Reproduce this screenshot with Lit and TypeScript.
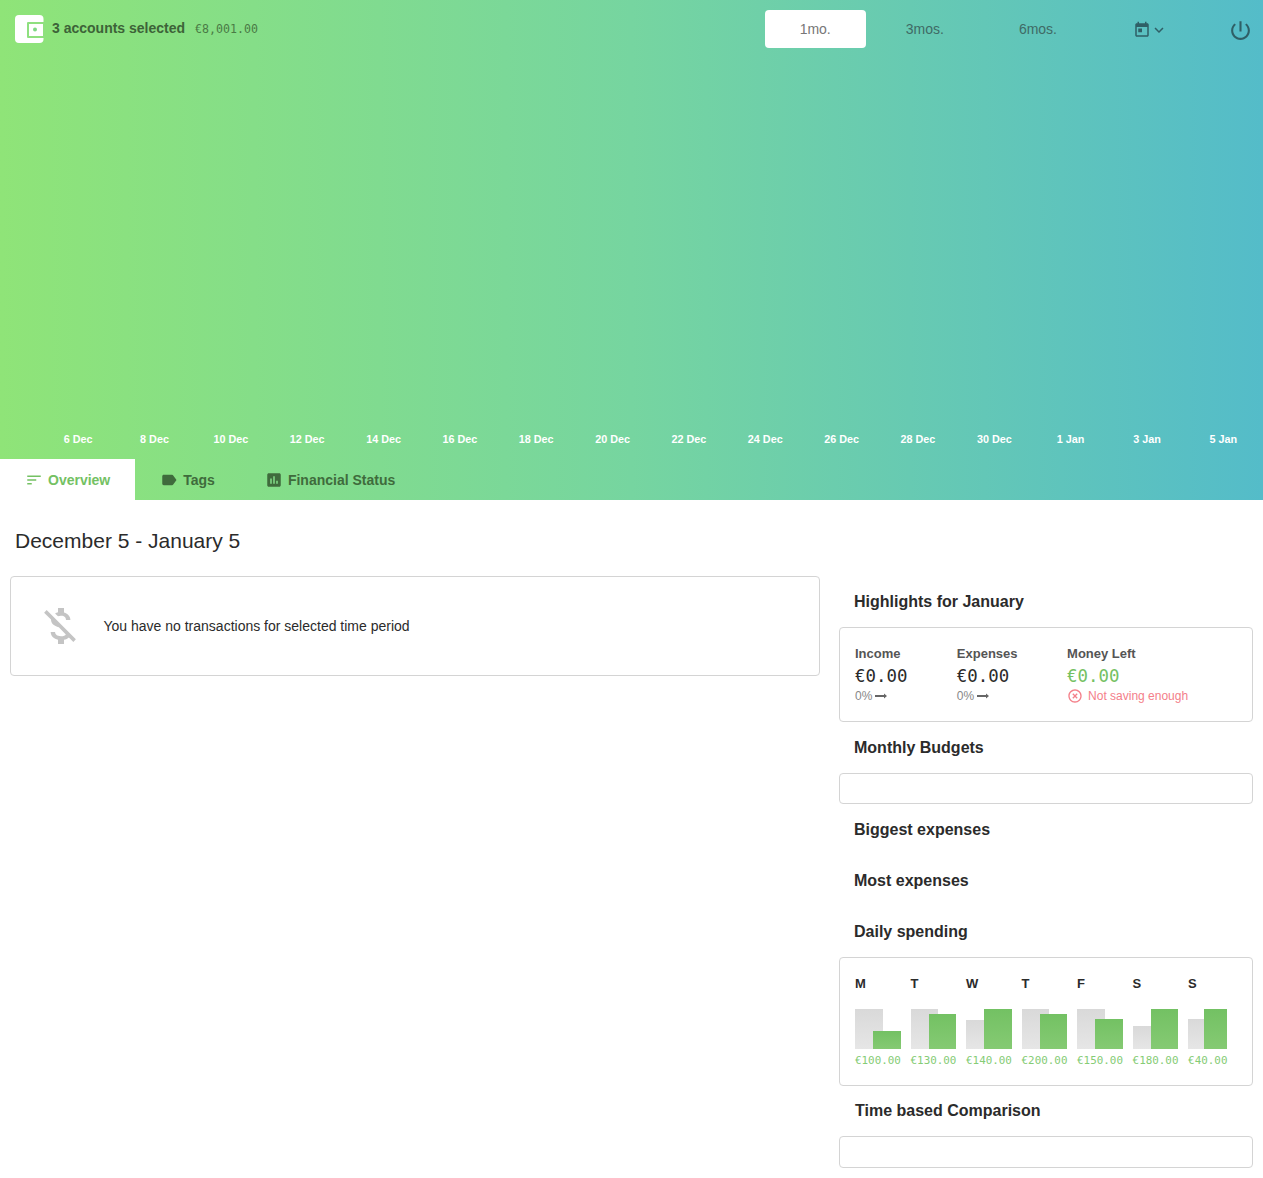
import { LitElement, html, css, svg } from 'lit';
import { customElement } from 'lit/decorators.js';

const labels = ['6 Dec', '8 Dec', '10 Dec', '12 Dec', '14 Dec', '16 Dec', '18 Dec', '20 Dec', '22 Dec', '24 Dec', '26 Dec', '28 Dec', '30 Dec', '1 Jan', '3 Jan', '5 Jan'];

const days = [
  { d: 'M', gray: 40, green: 18, amount: '€100.00' },
  { d: 'T', gray: 40, green: 35, amount: '€130.00' },
  { d: 'W', gray: 29, green: 40, amount: '€140.00' },
  { d: 'T', gray: 40, green: 35, amount: '€200.00' },
  { d: 'F', gray: 40, green: 30, amount: '€150.00' },
  { d: 'S', gray: 23, green: 40, amount: '€180.00' },
  { d: 'S', gray: 30, green: 40, amount: '€40.00' },
];

// material icon paths
const icons = {
  today: 'M19 3h-1V1h-2v2H8V1H6v2H5c-1.11 0-1.99.9-1.99 2L3 19c0 1.1.89 2 2 2h14c1.1 0 2-.9 2-2V5c0-1.1-.89-2-2-2zm0 16H5V8h14v11zM7 10h5v5H7z',
  chevron: 'M16.59 8.59L12 13.17 7.41 8.59 6 10l6 6 6-6z',
  power: 'M13 3h-2v10h2V3zm4.83 2.17l-1.42 1.42C17.99 7.86 19 9.81 19 12c0 3.87-3.13 7-7 7s-7-3.13-7-7c0-2.19 1.01-4.14 2.58-5.42L6.17 5.17C4.23 6.82 3 9.26 3 12c0 4.97 4.03 9 9 9s9-4.03 9-9c0-2.74-1.23-5.18-3.17-6.83z',
  sort: 'M3 18h6v-2H3v2zM3 6v2h18V6H3zm0 7h12v-2H3v2z',
  label: 'M17.63 5.84C17.27 5.33 16.67 5 16 5L5 5.01C3.9 5.01 3 5.9 3 7v10c0 1.1.9 1.99 2 1.99L16 19c.67 0 1.27-.33 1.63-.84L22 12l-4.37-6.16z',
  assessment: 'M19 3H5c-1.1 0-2 .9-2 2v14c0 1.1.9 2 2 2h14c1.1 0 2-.9 2-2V5c0-1.1-.9-2-2-2zM9 17H7v-7h2v7zm4 0h-2V7h2v10zm4 0h-2v-4h2v4z',
  moneyOff: 'M12.5 6.9c1.78 0 2.44.85 2.5 2.1h2.21c-.07-1.72-1.12-3.3-3.21-3.81V3h-3v2.16c-.53.12-1.03.3-1.48.54l1.47 1.47c.41-.17.91-.27 1.51-.27zM5.33 4.06L4.06 5.33 7.5 8.77c0 2.08 1.56 3.21 3.91 3.91l3.51 3.51c-.34.48-1.05.91-2.42.91-2.06 0-2.87-.92-2.98-2.1h-2.2c.12 2.19 1.76 3.42 3.68 3.83V21h3v-2.15c.96-.18 1.82-.55 2.45-1.12l2.22 2.22 1.27-1.27L5.33 4.06z',
  highlightOff: 'M14.59 8L12 10.59 9.41 8 8 9.41 10.59 12 8 14.59 9.41 16 12 13.41 14.59 16 16 14.59 13.41 12 16 9.41 14.59 8zM12 2C6.47 2 2 6.47 2 12s4.47 10 10 10 10-4.47 10-10S17.53 2 12 2zm0 18c-4.41 0-8-3.59-8-8s3.59-8 8-8 8 3.59 8 8-3.59 8-8 8z',
};

const icon = (d: string, size: number) => html`<svg class="icon" width=${size} height=${size} viewBox="0 0 24 24">${svg`<path d=${d} fill="currentColor"></path>`}</svg>`;

const arrow = html`<svg class="arrow" width="12" height="6" viewBox="0 0 12 6"><path d="M0 2h9V0.5L12 3 9 5.5V4H0z" fill="currentColor"></path></svg>`;

@customElement('app-root')
export class AppRoot extends LitElement {
  render() {
    return html`
      <section class="hero">
        <div class="topbar">
          <svg class="logo" width="30" height="28" viewBox="0 0 30 28">
            <rect width="28.5" height="28" rx="4" fill="#fff"></rect>
            <rect x="12" y="7" width="18" height="16" rx="1" fill="#8fe07f"></rect>
            <rect x="14" y="9" width="14" height="12" fill="#fff"></rect>
            <circle cx="20" cy="14.5" r="2" fill="#7fd884"></circle>
          </svg>
          <span class="accounts">3 accounts selected</span>
          <span class="balance">€8,001.00</span>
          <div class="ranges">
            <span class="range active">1mo.</span>
            <span class="range">3mos.</span>
            <span class="range">6mos.</span>
          </div>
          <div class="picker">${icon(icons.today, 18)}${icon(icons.chevron, 18)}</div>
          <div class="power">${icon(icons.power, 25)}</div>
        </div>
        <div class="axis">${labels.map((l) => html`<span>${l}</span>`)}</div>
        <nav class="tabs">
          <a class="tab active">${icon(icons.sort, 18)}Overview</a>
          <a class="tab">${icon(icons.label, 18)}Tags</a>
          <a class="tab">${icon(icons.assessment, 18)}Financial Status</a>
        </nav>
      </section>

      <h1 class="period">December 5 - January 5</h1>

      <main class="columns">
        <div class="card empty">
          <span class="empty-icon">${icon(icons.moneyOff, 48)}</span>
          <span>You have no transactions for selected time period</span>
        </div>
        <aside class="side">
          <h2>Highlights for January</h2>
          <div class="card highlights">
            <div class="stat">
              <div class="stat-label">Income</div>
              <div class="stat-value">€0.00</div>
              <div class="stat-sub">0%${arrow}</div>
            </div>
            <div class="stat">
              <div class="stat-label">Expenses</div>
              <div class="stat-value">€0.00</div>
              <div class="stat-sub">0%${arrow}</div>
            </div>
            <div class="stat">
              <div class="stat-label">Money Left</div>
              <div class="stat-value good">€0.00</div>
              <div class="stat-sub warn">${icon(icons.highlightOff, 16)}Not saving enough</div>
            </div>
          </div>
          <h2>Monthly Budgets</h2>
          <div class="card blank"></div>
          <h2>Biggest expenses</h2>
          <h2>Most expenses</h2>
          <h2>Daily spending</h2>
          <div class="card daily">
            ${days.map((x) => html`
              <div class="day">
                <div class="day-name">${x.d}</div>
                <div class="bars">
                  <div class="bar gray" style="height:${x.gray}px"></div>
                  <div class="bar green" style="height:${x.green}px"></div>
                </div>
                <div class="day-amount">${x.amount}</div>
              </div>
            `)}
          </div>
          <h2 class="compare">Time based Comparison</h2>
          <div class="card blank last"></div>
        </aside>
      </main>
    `;
  }

  static styles = css`
    :host {
      display: block;
      font-family: "Liberation Sans", Arial, sans-serif;
      color: #2b2b2b;
      background: #fff;
      padding-bottom: 10px;
    }
    .icon {
      display: block;
      flex: none;
    }
    .hero {
      height: 500px;
      display: flex;
      flex-direction: column;
      background: linear-gradient(90deg, #8fe478 0%, #76d5a0 50%, #54bcc9 100%);
    }
    .topbar {
      display: flex;
      align-items: center;
      height: 58px;
      padding-left: 15px;
      box-sizing: border-box;
    }
    .logo {
      flex: none;
    }
    .accounts {
      margin: 0 0 2px 7px;
      font-size: 14px;
      font-weight: 700;
      color: #3d6338;
    }
    .balance {
      margin-left: 10px;
      font-family: "DejaVu Sans Mono", monospace;
      font-size: 11.6px;
      color: #4a7a45;
    }
    .ranges {
      display: flex;
      gap: 5px;
      margin-left: auto;
    }
    .range {
      padding: 0 35px;
      height: 38px;
      line-height: 38px;
      font-size: 14px;
      color: #3f6b66;
      border-radius: 4px;
    }
    .range.active {
      background: #fff;
      color: #777;
    }
    .picker {
      display: flex;
      margin: 2px 0 0 41px;
      color: #2f5f66;
    }
    .picker .icon:last-child {
      margin-left: -1px;
    }
    .power {
      margin: 2px 10px 0 60px;
      color: #2f5f66;
    }
    .axis {
      display: grid;
      grid-template-columns: repeat(16, 76.35px);
      margin-top: auto;
      padding-left: 40px;
      height: 32px;
      align-items: center;
      box-sizing: border-box;
      padding-bottom: 9px;
    }
    .axis span {
      text-align: center;
      font-size: 10.8px;
      font-weight: 700;
      color: #fff;
    }
    .tabs {
      display: flex;
      height: 41px;
    }
    .tab {
      display: flex;
      align-items: center;
      gap: 5px;
      padding: 0 25px;
      font-size: 14px;
      font-weight: 700;
      color: #3f6b3c;
    }
    .tab.active {
      background: #fff;
      color: #74c163;
    }
    .period {
      margin: 0;
      padding: 0 15px;
      height: 76px;
      line-height: 82px;
      font-size: 21px;
      font-weight: 400;
      color: #2b2b2b;
      box-sizing: border-box;
    }
    .columns {
      display: grid;
      grid-template-columns: 810px 414px;
      gap: 19px;
      padding: 0 10px;
      align-items: start;
    }
    .card {
      border: 1px solid #d4d4d4;
      border-radius: 4px;
      box-sizing: border-box;
    }
    .empty {
      display: flex;
      align-items: center;
      gap: 19.5px;
      height: 100px;
      padding-left: 25px;
      font-size: 14px;
    }
    .empty-icon {
      color: #c4c4c4;
    }
    .side h2 {
      margin: 0;
      padding-left: 15px;
      height: 51px;
      line-height: 51px;
      font-size: 16px;
      font-weight: 700;
      color: #2b2b2b;
    }
    .side h2.compare {
      height: 50px;
      line-height: 49px;
      padding-left: 16px;
    }
    .highlights {
      display: flex;
      gap: 49.5px;
      height: 95px;
      padding: 16px 15px 0;
    }
    .stat-label {
      font-size: 13px;
      font-weight: 700;
      color: #555;
      line-height: 19px;
      margin-bottom: 1px;
    }
    .stat-value {
      font-family: "DejaVu Sans Mono", monospace;
      font-size: 17.4px;
      line-height: 24px;
      color: #2b2b2b;
    }
    .stat-value.good {
      color: #74c163;
    }
    .stat-sub {
      display: flex;
      align-items: center;
      height: 16px;
      font-size: 12px;
      color: #888;
    }
    .stat-sub .arrow {
      color: #666;
      margin-left: 3px;
    }
    .stat-sub.warn {
      gap: 5px;
      color: #f4808a;
    }
    .blank {
      height: 31px;
    }
    .blank.last {
      height: 32px;
    }
    .daily {
      display: flex;
      gap: 9.62px;
      height: 129px;
      padding: 16px 15px 0;
    }
    .day-name {
      font-size: 13px;
      font-weight: 700;
      line-height: 20px;
      color: #2b2b2b;
    }
    .bars {
      display: flex;
      align-items: flex-end;
      height: 40px;
      margin-top: 15px;
    }
    .bar {
      width: 60%;
      flex: none;
    }
    .bar.gray {
      background: linear-gradient(#d9d9d9, #e6e6e6);
    }
    .bar.green {
      margin-left: -20.5%;
      background: linear-gradient(#73c163, #85ca73);
    }
    .day-amount {
      margin-top: 5px;
      font-family: "DejaVu Sans Mono", monospace;
      font-size: 10.9px;
      line-height: 14px;
      color: #85cc75;
    }
  `;
}
